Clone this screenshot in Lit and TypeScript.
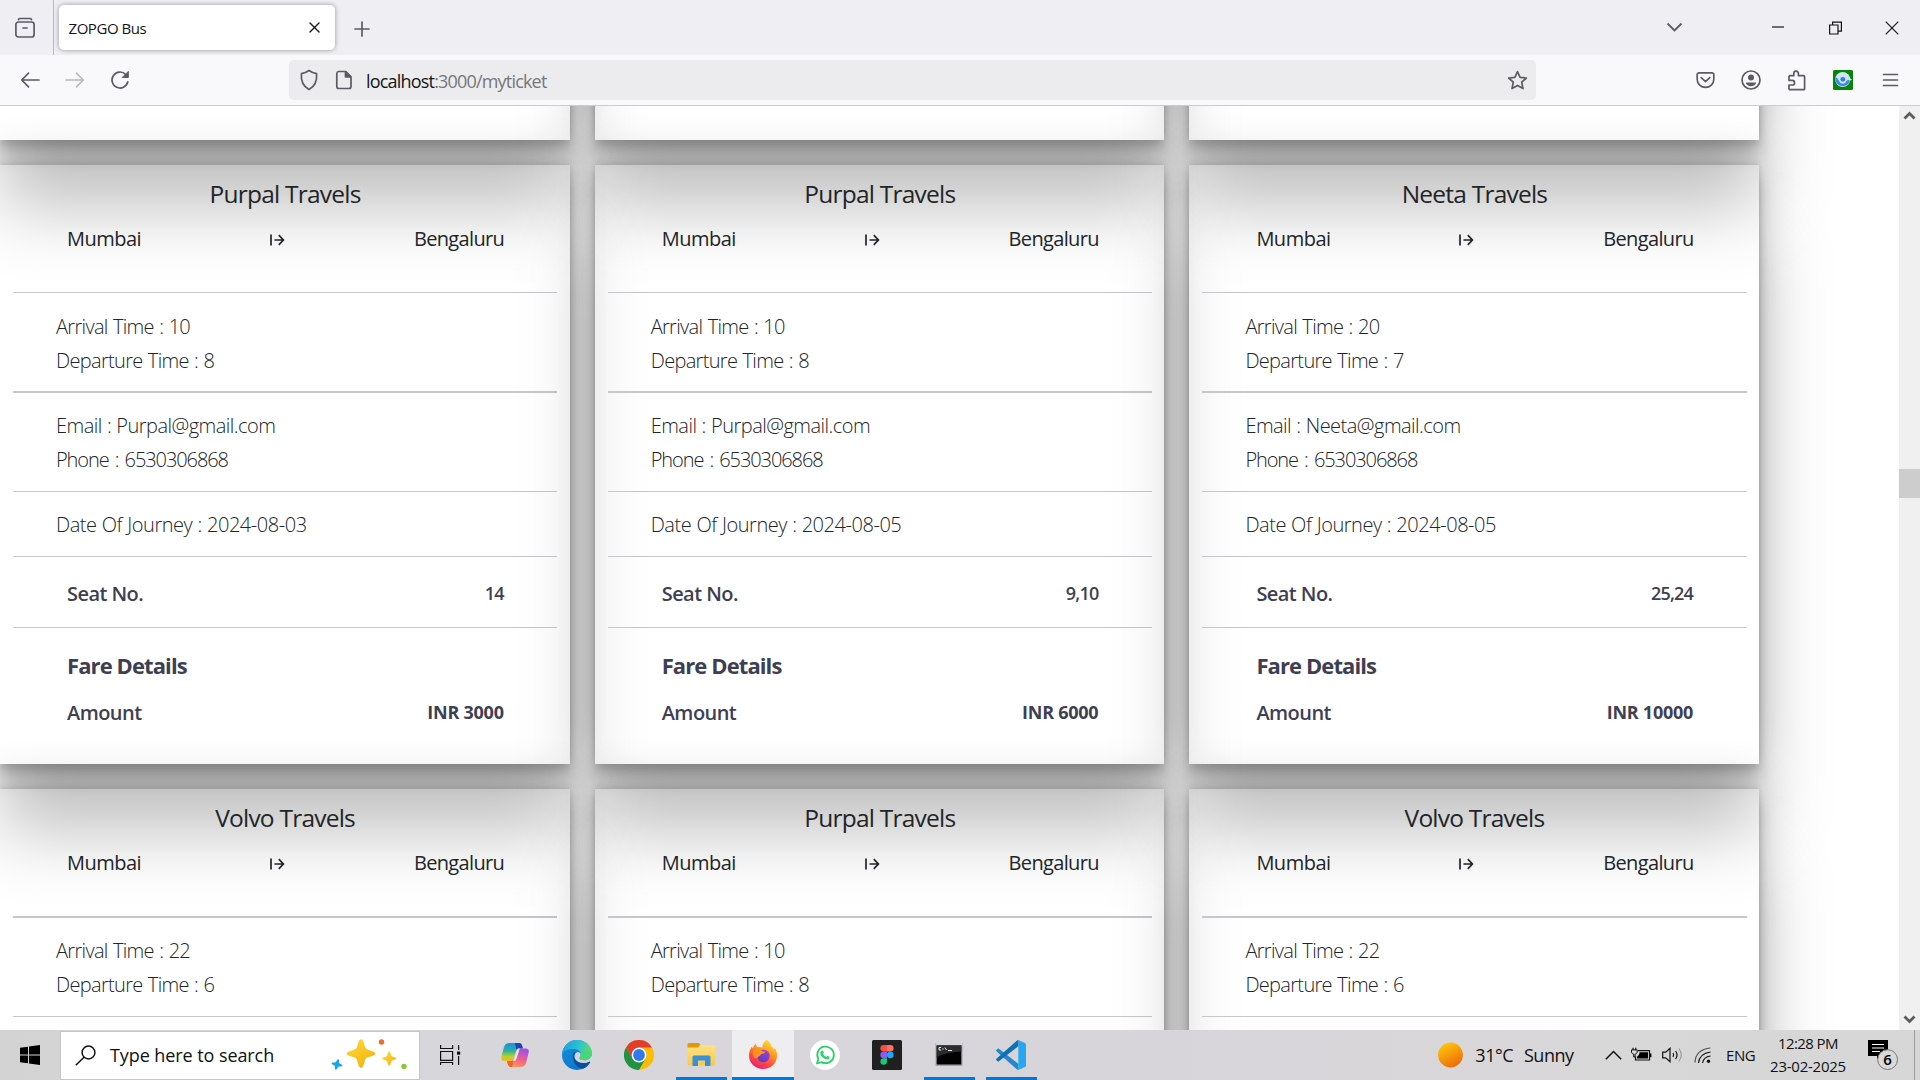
import {LitElement, html, css, svg, nothing} from "lit";
import {customElement, property} from "lit/decorators.js";
import {classMap} from "lit/directives/class-map.js";

interface Ticket {
  bus: string;
  arrival: string;
  departure: string;
  email: string;
  phone: string;
  date: string;
  seats: string;
  amount: string;
}

const PURPAL = {bus: "Purpal Travels", arrival: "10", departure: "8", email: "Purpal@gmail.com", phone: "6530306868"};
const NEETA = {bus: "Neeta Travels", arrival: "20", departure: "7", email: "Neeta@gmail.com", phone: "6530306868"};

const TICKETS: Ticket[] = [
  {...PURPAL, date: "2024-08-03", seats: "14", amount: "3000"},
  {...PURPAL, date: "2024-08-05", seats: "9,10", amount: "6000"},
  {...NEETA, date: "2024-08-05", seats: "25,24", amount: "10000"},
];

/* Tickets of the row whose lower part lies below the fold. */
const NEXT_ROW: Partial<Ticket>[] = [
  {bus: "Volvo Travels", arrival: "22", departure: "6"},
  {bus: "Purpal Travels", arrival: "10", departure: "8"},
  {bus: "Volvo Travels", arrival: "22", departure: "6"},
];

@customElement("ticket-card")
class TicketCard extends LitElement {
  @property({attribute: false}) ticket?: Partial<Ticket>;

  static styles = css`
    :host {
      display: block;
      box-sizing: border-box;
      height: 599px;
      padding: 0 12.5px 0 13px;
      color: #212529;
      font-size: 20px;
      line-height: 30px;
      box-shadow:
        rgba(0, 0, 0, 0.25) 0 67.5px 68.75px,
        rgba(0, 0, 0, 0.12) 0 -15px 37.5px,
        rgba(0, 0, 0, 0.12) 0 5px 7.5px,
        rgba(0, 0, 0, 0.17) 0 15px 16.25px,
        rgba(0, 0, 0, 0.09) 0 -3.75px 6.25px;
    }
    .head { box-sizing: border-box; height: 127px; padding-top: 14px; }
    .title { text-align: center; font-size: 24.5px; letter-spacing: -0.77px; }
    .route {
      display: flex; justify-content: space-between; align-items: center;
      margin-top: 15px; padding: 0 53px 0 54px; letter-spacing: -0.5px;
    }
    .dest { letter-spacing: -0.65px; }
    .arrow { display: block; margin-top: 2px; }
    section { box-sizing: border-box; border-top: 1px solid #c6c7c8; }
    .light { font-weight: 300; padding-left: 43px; line-height: 34px; }
    .times { height: 99px; padding-top: 17px; }
    .contact { height: 100px; border-top-width: 2px; padding-top: 16px; }
    .snap .times { height: 100px; border-top-width: 2px; padding-top: 16px; }
    .snap .contact { height: 99px; border-top-width: 1px; }
    .date { height: 65px; padding-top: 16px; }
    .seat { height: 71px; padding-top: 22px; }
    .fare { height: 137px; padding-top: 22px; }
    .t-time { letter-spacing: -0.68px; word-spacing: 0.8px; }
    .t-mail { letter-spacing: -0.52px; word-spacing: 0.5px; }
    .t-phone { letter-spacing: -1.08px; word-spacing: 2px; }
    .t-date { letter-spacing: -0.45px; word-spacing: 0.4px; }
    .strong { color: #3e3f52; font-weight: 600; }
    .pair { display: flex; justify-content: space-between; padding: 0 53.5px 0 54px; letter-spacing: -0.55px; }
    .value { font-size: 18px; letter-spacing: -0.8px; line-height: 29px; }
    .bold { font-weight: 700; letter-spacing: -0.25px; }
    .fare-title { padding-left: 54px; font-size: 22px; font-weight: 700; letter-spacing: -0.9px; margin-bottom: 18px; }
  `;

  render() {
    const t = this.ticket;
    if (!t) return nothing;
    const full = !!t.email;
    return html`
      <div class=${classMap({snap: !full})}>
        <div class="head">
          <div class="title">${t.bus}</div>
          <div class="route">
            <span>Mumbai</span>
            <svg class="arrow" width="15" height="12" viewBox="0 0 15 12" fill="none" stroke="#212529" stroke-width="1.7">
              <path d="M1 0.5v11M4.5 6h8.5M8.8 1.2 13.4 6l-4.6 4.8" />
            </svg>
            <span class="dest">Bengaluru</span>
          </div>
        </div>
        <section class="light times">
          <div class="t-time">Arrival Time : ${t.arrival}</div>
          <div class="t-time">Departure Time : ${t.departure}</div>
        </section>
        <section class="light contact">
          ${full ? html`<div class="t-mail">Email : ${t.email}</div><div class="t-phone">Phone : ${t.phone}</div>` : nothing}
        </section>
        ${full ? html`
          <section class="light date"><div class="t-date">Date Of Journey : ${t.date}</div></section>
          <section class="strong seat">
            <div class="pair"><span>Seat No.</span><span class="value">${t.seats}</span></div>
          </section>
          <section class="strong fare">
            <div class="fare-title">Fare Details</div>
            <div class="pair"><span>Amount</span><span class="value bold">INR ${t.amount}</span></div>
          </section>` : nothing}
      </div>
    `;
  }
}

@customElement("browser-chrome")
class BrowserChrome extends LitElement {
  static styles = css`
    :host { display: block; color: #15141a; }
    svg { display: block; flex: none; fill: none; stroke: #5b5b66; stroke-width: 1.7; stroke-linecap: round; stroke-linejoin: round; }
    .tabs { display: flex; height: 55px; background: #efeef3; align-items: center; }
    .side { display: flex; width: 54px; height: 55px; box-sizing: border-box; padding-left: 14px; align-items: center; border-right: 1px solid #b9b9c0; }
    .tab {
      display: flex; align-items: center; justify-content: space-between; box-sizing: border-box;
      width: 276px; height: 45px; margin-left: 5px; padding: 0 14px 0 9.5px;
      background: #fff; border-radius: 5px; box-shadow: 0 0 5px rgba(0, 0, 0, 0.38);
      font-size: 15px; letter-spacing: -0.45px;
    }
    .tab svg { stroke: #15141a; stroke-width: 1.4; }
    .plus { margin: 2px 0 0 18.5px; }
    .win { display: flex; align-items: center; margin-left: auto; padding-right: 21.5px; }
    .win svg { stroke: #15141a; stroke-width: 1.2; stroke-linecap: butt; stroke-linejoin: miter; }
    .win .down { stroke: #5b5b66; stroke-width: 1.8; margin-right: 89px; }
    .win .min { margin-right: 45px; }
    .win .rest { margin-right: 43px; }
    .bar { display: flex; align-items: center; box-sizing: border-box; height: 51px; background: #f9f9fb; border-bottom: 1px solid #cbcbd0; padding: 0 21px 0 20px; }
    .back { margin-right: 25px; }
    .fwd { opacity: 0.4; margin-right: 25px; }
    .url {
      display: flex; align-items: center; box-sizing: border-box; width: 1247px; height: 40px;
      margin-left: 159px; padding: 0 8.5px 0 10px; background: #ececee; border-radius: 5px;
      font-size: 18px; letter-spacing: -0.81px;
    }
    .page { margin: 0 13px 0 16px; }
    .address { padding-top: 2px; }
    .path { color: #77767c; }
    .star { margin-left: auto; }
    .tools { display: flex; align-items: center; margin-left: auto; }
    .tools svg + svg { margin-left: 26px; }
    .tools svg.ext { stroke: none; margin-left: 27.5px; }
    .tools svg.menu { margin-left: 29px; }
  `;

  render() {
    return html`
      <div class="tabs">
        <div class="side">
          <svg width="22" height="22" viewBox="0 0 22 22"><path d="M4.5 2.5Q5 1.5 6 1.500h10q1 0 1.500 1" /><rect x="1.900" y="5" width="18.200" height="15" rx="2.500" /><path d="M9 11h4" /></svg>
        </div>
        <div class="tab">
          <span>ZOPGO Bus</span>
          <svg width="13" height="13" viewBox="0 0 13 13"><path d="m2 2 9 9M11 2l-9 9" /></svg>
        </div>
        <svg class="plus" width="16" height="16" viewBox="0 0 16 16"><path d="M8 1v14M1 8h14" /></svg>
        <div class="win">
          <svg class="down" width="17" height="11" viewBox="0 0 17 11"><path d="m1.500 1.500 7 7 7-7" /></svg>
          <svg class="min" width="12" height="12" viewBox="0 0 12 12"><path d="M0 5h12" /></svg>
          <svg class="rest" width="13" height="14" viewBox="0 0 13 14"><path d="M.6 4h8.400v9H.6zM3.600 4V1.100h8.800v9H9" /></svg>
          <svg width="14" height="14" viewBox="0 0 14 14"><path d="m.7.7 12.600 12.600M13.300.7.7 13.300" /></svg>
        </div>
      </div>
      <div class="bar">
        <svg class="back" width="20" height="18" viewBox="0 0 20 18"><path d="M2 9h17M8.500 2.200 1.800 9l6.700 6.800" /></svg>
        <svg class="fwd" width="20" height="18" viewBox="0 0 20 18"><path d="M1 9h17M11.500 2.200 18.200 9l-6.700 6.800" /></svg>
        <svg width="20" height="20" viewBox="0 0 20 20"><path d="M17.800 11.800A8 8 0 1 1 15.800 4.500" /><path d="M18.300 1.800v5.700h-5.700z" fill="#5b5b66" stroke-width="1" /></svg>
        <div class="url">
          <svg width="20" height="22" viewBox="0 0 20 22"><path d="M10 1.500c2.400 1.700 4.700 2.700 7.600 3.200.5 6-1.200 12.300-7.600 15.800C3.600 17 1.900 10.700 2.400 4.700 5.300 4.200 7.600 3.200 10 1.500z" /></svg>
          <svg class="page" width="18" height="20" viewBox="0 0 18 20"><path d="M3.500 1.500h7.300l5.200 5.300v9.700a2 2 0 0 1-2 2H3.800a2 2 0 0 1-2-2v-13a2 2 0 0 1 1.700-2z" /><path d="M10.500 1.800v5h5.200z" fill="#5b5b66" /></svg>
          <span class="address">localhost<span class="path">:3000/myticket</span></span>
          <svg class="star" width="21" height="21" viewBox="0 0 21 21"><path d="m10.500 1.600 2.600 5.700 6.300.7-4.700 4.200 1.300 6.400-5.500-3.200L5 18.600l1.300-6.400L1.600 8l6.300-.7z" /></svg>
        </div>
        <div class="tools">
          <svg width="19" height="18" viewBox="0 0 19 18"><path d="M3 1.800h13a1.800 1.800 0 0 1 1.800 1.800v5a8.300 7.800 0 0 1-16.600 0v-5A1.800 1.800 0 0 1 3 1.800z" /><path d="m5.200 6.600 4.300 4 4.300-4" /></svg>
          <svg width="20" height="20" viewBox="0 0 20 20"><circle cx="10" cy="10" r="9" /><circle cx="10" cy="7.600" r="3" fill="#5b5b66" stroke="none" /><path d="M4.800 12.600h10.400c-.5 2.500-2.800 3.700-5.200 3.700s-4.700-1.200-5.200-3.700z" fill="#5b5b66" stroke="none" /></svg>
          <svg width="19" height="21" viewBox="0 0 19 21"><path d="M6.800 5.700V3.500a2.300 2.300 0 0 1 4.600 0v2.200h5.200a1 1 0 0 1 1 1v12a1 1 0 0 1-1 1H3a1 1 0 0 1-1-1v-3.700h3.200a2.300 2.300 0 0 0 0-4.700H2V6.700a1 1 0 0 1 1-1z" /></svg>
          <svg class="ext" width="20" height="20" viewBox="0 0 20 20"><rect width="20" height="20" rx="1.500" fill="#068406" /><circle cx="9.700" cy="9.500" r="7.600" fill="#cfe4fb" /><path d="M2.200 7.500c2 .2 3.200 1.500 3.800 3.500a4 4 0 0 0 7.600-.2l3.700-1.600A7.600 7.600 0 1 1 2.200 7.500z" fill="#3b8ae4" /><circle cx="9.800" cy="9.300" r="2.400" fill="#2f7fe0" /><path d="m16 7.500 3 2-2.600 1.500z" fill="#cfe4fb" /></svg>
          <svg class="menu" width="17" height="14" viewBox="0 0 17 14"><path d="M1.500 1.500h14M1.500 7h14M1.500 12.500h14" /></svg>
        </div>
      </div>
    `;
  }
}

const sparkle = (x: number, y: number, r: number, fill: string) => svg`
  <path transform="translate(${x} ${y}) scale(${r})" fill=${fill}
    d="M0-1C.14-1 .2-.75.27-.5.33-.34.37-.3.53-.25.8-.17 1-.13 1 0S.8.17.53.25C.37.3.33.34.27.5.2.75.14 1 0 1S-.2.75-.27.5C-.33.34-.37.3-.53.25-.8.17-1 .13-1 0S-.8-.17-.53-.25C-.37-.3-.33-.34-.27-.5-.2-.75-.14-1 0-1z" />`;

const ICONS = {
  copilot: svg`
    <defs>
      <linearGradient id="cl" x1="0" y1="0" x2="0" y2="1"><stop offset="0" stop-color="#1a8fe8" /><stop offset=".45" stop-color="#2fb39a" /><stop offset=".75" stop-color="#b9d12c" /><stop offset="1" stop-color="#f7b52c" /></linearGradient>
      <linearGradient id="cr" x1=".6" y1="0" x2=".2" y2="1"><stop offset="0" stop-color="#a44de8" /><stop offset=".5" stop-color="#f0608c" /><stop offset="1" stop-color="#ffa04e" /></linearGradient>
    </defs>
    <path d="M10 3h9c2 0 2.600 1.200 3.200 3l.7 2.500h-4c-2 0-2.500 1.200-3 3L14 18c-.6 2-1.500 3-3.500 3H4c-2 0-3.200-1.500-2.700-4L4 7c.8-2.700 2.500-4 6-4z" fill="url(#cl)" />
    <path d="M15 3h4c2 0 2.600 1.200 3.200 3l.7 2.500h-4c-1.300 0-2 .4-2.500 1.400z" fill="#1746b8" />
    <path d="M20 27h-9c-2 0-2.600-1.200-3.200-3L7 21h4c2 0 2.700-1 3.200-3l2-6.500c.6-2 1.500-3 3.500-3H26c2 0 3.200 1.500 2.700 4L26 23c-.8 2.700-2.500 4-6 4z" fill="url(#cr)" />
    <path d="M7 21h4c1.500 0 2.300-.6 2.800-1.800L12 26.900h-1c-2 0-2.600-1.200-3.200-3z" fill="#f0622e" />
    <path d="M16.800 10c.6-1.200 1.500-1.500 3-1.500l-3.400 10.500c-.6 1.800-1.600 2-3.200 2z" fill="#e9e6ee" />`,
  edge: svg`
    <defs>
      <linearGradient id="eg" x1="0" y1=".3" x2="1" y2=".5"><stop offset="0" stop-color="#1ba0e0" /><stop offset=".55" stop-color="#2fc3cf" /><stop offset="1" stop-color="#62e05a" /></linearGradient>
      <linearGradient id="eb" x1="0" y1="0" x2="1" y2="1"><stop offset="0" stop-color="#1591dd" /><stop offset="1" stop-color="#0a6cc4" /></linearGradient>
    </defs>
    <circle cx="15" cy="15" r="15" fill="url(#eb)" />
    <path d="M.2 13.500C1 6 7 0 15 0c8.500 0 15 6 15 12.500 0 5-3.500 7.800-7.500 7.800-3.300 0-5-1-5-2.300 0-.7 1.300-1.500 1.300-3.600 0-2.800-3-5.300-7-5.300C6.500 9.100 2 10.500.2 13.500z" fill="url(#eg)" />
    <path d="M11.500 13c-2 5 .8 15 9.500 15.800 3-1.200 5.500-3.500 7-6.300.4-.8-.3-1.200-1-.7-6 3-14 .4-14.500-4.800-.1-1.500.2-3 1-4.200-.8-.3-1.600-.3-2 .2z" fill="#0d4f9e" />
    <path d="M28 22.500c.4-.8-.3-1.200-1-.7-6 3-14.400 0-14.500-5.300 0-2.500 1.500-4.300 3.300-4.600 2 .2 3 1.500 3 2.900 0 1.800-1.300 2.500-1.300 3.200 0 1.300 1.700 2.300 5 2.300 4 0 7.500-2.800 7.500-7.300V22z" fill="#d8d6dc" />
    <path d="M17.500 18c0 1.300 1.700 2.300 5 2.300 4 0 7.500-2.800 7.500-7.800l-5-2-7 3c1.400 2 -.5 3.800-.5 4.500z" fill="#4cd47c" />`,
  chrome: svg`
    <circle cx="15" cy="15" r="15" fill="#fbbc08" />
    <path d="M2 7.500A15 15 0 0 1 28 7.500H15L8.500 18.800z" fill="#e33b2e" />
    <path d="M2 7.500a15 15 0 0 0 13 22.500l6.500-11.300L8.600 18.800z" fill="#1f9246" />
    <circle cx="15" cy="15" r="7.400" fill="#fff" /><circle cx="15" cy="15" r="5.900" fill="#2f79ee" />`,
  explorer: svg`
    <defs><linearGradient id="fo" x1="0" y1="0" x2="0" y2="1"><stop offset="0" stop-color="#ffe083" /><stop offset="1" stop-color="#f9c94c" /></linearGradient></defs>
    <path d="M1.500 4.500q0-1.500 1.500-1.500h10l1.500 2v3h-13z" fill="#dd9a05" />
    <path d="M1.500 7.500h10.500l2-2.500h13.500q1.500 0 1.500 1.500V24q0 1.500-1.500 1.500H3q-1.500 0-1.500-1.500z" fill="url(#fo)" />
    <path d="M6.500 26V17q0-1.500 1.500-1.500h15q1.500 0 1.500 1.500v9H19v-5.500h-7V26z" fill="#3a8fd6" />`,
  firefox: svg`
    <defs>
      <linearGradient id="ff" x1=".8" y1="0" x2=".3" y2="1"><stop offset="0" stop-color="#ffe437" /><stop offset=".4" stop-color="#ff9a1f" /><stop offset=".7" stop-color="#ff4a3e" /><stop offset="1" stop-color="#e41f7b" /></linearGradient>
      <linearGradient id="fp" x1=".8" y1="0" x2=".3" y2="1"><stop offset="0" stop-color="#a63ee0" /><stop offset="1" stop-color="#5a3ac0" /></linearGradient>
    </defs>
    <path d="M18.500 0c3.300 1.800 4.500 4 5 6.500 1.300.8 1.800 1.700 2.300 3 .6-.4.800-1 .8-1.700 2 2.800 2.800 5.700 2.400 9C28.300 24 22.500 29 15 29S1 23.500 1 15.500c0-4 1.500-7 3-9 .1 1 .3 1.500.8 2 .4-2 1.600-3.800 3.200-5 0 1.500.6 2.800 1.700 3.700 2-.3 3.600 0 4.800.5C14 5 15.500 2 18.500 0z" fill="url(#ff)" />
    <circle cx="15.500" cy="16" r="6.200" fill="url(#fp)" />
    <path d="M5 10.500c3-2 7-1.700 9.500.8 1 .3 2 .3 3 .2-.5 1.800-2.500 2.300-4.300 2.700-1 .3-.7 1.800-2.700 2.200-1.500.3-.8 2.800-4 1.500C5 16 4.500 13 5 10.500z" fill="#ff9220" />`,
  whatsapp: svg`
    <circle cx="15" cy="15" r="15" fill="#fff" />
    <path d="M7 23.500l1.300-4.600a8.300 8.300 0 1 1 3.200 3.200z" fill="none" stroke="#25d366" stroke-width="1.800" stroke-linejoin="round" />
    <path d="M12.200 10.500c.5-.2.900 0 1 .4l.6 1.500c.1.500-.4 1-.8 1.400.7 1.500 1.800 2.500 3.300 3.200.5-.5.8-1.200 1.300-1l1.700.8c.4.300.2 1.200-.2 1.700-1.200 1.300-3 .9-4.900-.1-1.700-1-3-2.400-3.700-4.200-.5-1.500.2-3 1.700-3.700z" fill="#25d366" />`,
  figma: svg`
    <rect width="30" height="30" rx="1.500" fill="#202020" />
    <path d="M15 5h-3.300a3.300 3.300 0 0 0 0 6.600H15z" fill="#f9503a" /><path d="M15 5h3.300a3.300 3.300 0 0 1 0 6.600H15z" fill="#ff7262" />
    <path d="M15 11.600h-3.300a3.300 3.300 0 0 0 0 6.600H15z" fill="#8d58ff" /><circle cx="18.300" cy="14.900" r="3.300" fill="#19a9f5" />
    <path d="M15 18.200h-3.300a3.300 3.300 0 1 0 3.300 3.300z" fill="#18c979" />`,
  terminal: svg`
    <rect x="1.500" y="3" width="27" height="23" fill="#9fa4ab" /><rect x="2" y="3" width="26" height="2.200" fill="#cfd6de" />
    <rect x="2.700" y="5.500" width="24.600" height="19" fill="#020202" /><path d="M2.700 5.500h24.600v6C20 12 10 13 2.700 17z" fill="#2c2c2c" />
    <path d="M5 7.500h2.200M5 7.500v2.500h2.200M9 8v.8M9 9.500v.5M11 7.500l1.500 2.500M14 10.500h4" stroke="#fff" stroke-width=".9" fill="none" />`,
  vscode: svg`
    <path d="M2.600 8.600 22.500 24v5.800h-1.200L.4 11.300q-.6-.7 0-1.300L1.500 8.700q.5-.5 1.100-.1z" fill="#2489ca" />
    <path d="M2.600 21.400 22.500 6V.2h-1.200L.4 18.700q-.6.700 0 1.300l1.100 1.300q.5.500 1.100.1z" fill="#1070b3" />
    <path d="M22.300 0 29 3q1 .5 1 1.500v21q0 1-1 1.500l-6.700 3z" fill="#27a7f0" />`,
};

type AppKey = keyof typeof ICONS;
const APPS: {icon: AppKey; running?: boolean; active?: boolean}[] = [
  {icon: "copilot"}, {icon: "edge"}, {icon: "chrome"}, {icon: "explorer", running: true},
  {icon: "firefox", running: true, active: true}, {icon: "whatsapp"}, {icon: "figma"},
  {icon: "terminal", running: true}, {icon: "vscode", running: true},
];

@customElement("task-bar")
class TaskBar extends LitElement {
  static styles = css`
    :host {
      display: flex; align-items: center; box-sizing: border-box; height: 50px; color: #111; padding-right: 5px;
      background: linear-gradient(90deg, #d3d3d4 0, #d7d6db 25%, #d7d5da 60%, #d9d7d9 80%, #d7d7d7 100%);
    }
    svg { display: block; flex: none; }
    .start { padding: 0 20px; }
    .search {
      display: flex; align-items: center; box-sizing: border-box; width: 360px; height: 49px;
      margin-top: 1px; padding: 0 12px 0 14px; background: #fff; border: 1px solid #c6c6c8;
      font-size: 18px; letter-spacing: -0.08px;
    }
    .search span { padding-bottom: 2px; }
    .search .glass { margin-right: 14px; }
    .search .spark { margin: 0 0 1px auto; }
    .view { width: 64px; display: flex; box-sizing: border-box; padding-left: 20px; }
    .app { position: relative; display: flex; width: 62px; height: 50px; align-items: center; justify-content: center; }
    .app.active { background: #eeeef0; }
    .app.running::after { content: ""; position: absolute; left: 5.5px; right: 5.5px; bottom: 0; height: 3px; background: #0078d7; }
    .app.active::after { left: 0; right: 0; }
    .tray { display: flex; align-items: center; margin-left: auto; height: 50px; }
    .weather { display: flex; gap: 11px; font-size: 18px; letter-spacing: -0.5px; margin: 0 31px 0 12.5px; }
    .battery { margin-left: 9.5px; }
    .volume { margin-left: 10px; }
    .wifi { margin-left: 11px; }
    .lang { font-size: 15px; margin: 0 15px 0 14px; letter-spacing: -0.4px; width: 29px; }
    .clock { width: 76px; text-align: center; font-size: 15px; line-height: 23px; letter-spacing: -0.25px; margin-right: 22px; }
    .clock .time { letter-spacing: -0.6px; }
    .note { margin-right: 15px; }
    .note text { font: 600 15px "Open Sans", "Noto Sans", sans-serif; }
    .peek { width: 1px; height: 50px; background: #a0a0a2; }
  `;

  render() {
    return html`
      <div class="start">
        <svg width="20" height="20" viewBox="0 0 20 20"><path d="M0 2.800 8 1.700v7.800H0zM9 1.500 20 0v9.500H9zM0 10.500h8v7.800l-8-1.100zM9 10.500h11V20L9 18.500z" /></svg>
      </div>
      <div class="search">
        <svg class="glass" width="21" height="21" viewBox="0 0 21 21" fill="none" stroke="#111" stroke-width="1.500"><circle cx="13.500" cy="7.500" r="6.400" /><path d="M9 12.200.8 20.300" /></svg>
        <span>Type here to search</span>
        <svg class="spark" width="77" height="32" viewBox="0 0 77 32">
          <defs><linearGradient id="sy" x1="0" y1="0" x2=".7" y2="1"><stop offset="0" stop-color="#ffdc3a" /><stop offset="1" stop-color="#f3b411" /></linearGradient></defs>
          ${sparkle(31, 14.5, 14.3, "url(#sy)")}${sparkle(59.200, 19.500, 7, "url(#sy)")}
          <g transform="rotate(14 7 25.500)">${sparkle(7, 25.500, 5.500, "#15a5ec")}</g>
          <circle cx="51.500" cy="3" r="2.700" fill="#f26a2e" /><circle cx="74" cy="27.500" r="2.700" fill="#8cc63f" />
        </svg>
      </div>
      <div class="view">
        <svg width="21" height="20" viewBox="0 0 21 20" fill="none" stroke="#111" stroke-width="1.200"><path d="M.6 0v3.500h12V0M.6 6.500h12v8.800H.6zM.6 20v-2.500h12V20M18.600 0v5M18.600 11v9" /><path d="M17 6.500h3.200v3.200H17z" fill="#111" stroke="none" /></svg>
      </div>
      ${APPS.map(a => html`
        <div class=${classMap({app: true, running: !!a.running, active: !!a.active})}>
          <svg width="30" height="30" viewBox="0 0 30 30">${ICONS[a.icon]}</svg>
        </div>`)}
      <div class="tray">
        <svg width="25" height="26" viewBox="0 0 25 26"><defs><linearGradient id="sun" x1=".2" y1="0" x2=".7" y2="1"><stop offset="0" stop-color="#ffca0a" /><stop offset="1" stop-color="#ec6a06" /></linearGradient></defs><circle cx="12.500" cy="13" r="12.400" fill="url(#sun)" /></svg>
        <div class="weather"><span>31°C</span><span>Sunny</span></div>
        <svg width="17" height="10" viewBox="0 0 17 10" fill="none" stroke="#111" stroke-width="1.500"><path d="m.8 9.200 7.700-7.700 7.700 7.700" /></svg>
        <svg class="battery" width="21" height="16" viewBox="0 0 21 16"><path d="M7 3.700h11.500v9.300H4.500V9.500" fill="none" stroke="#111" stroke-width="1.200" /><path d="M8.500 5.300h8.500v6.200H6V9.700Q8.300 8.300 8.500 6z" /><path d="M19 6.500h1.400v3.800H19z" /><path d="M2 .8V3M4.700.8V3" stroke="#111" stroke-width="1.200" /><path d="M.5 2.900h5.700v2.300Q5.500 7 4 7.300V10H2.700V7.300Q.9 6.800.5 5.200z" fill="none" stroke="#111" /></svg>
        <svg class="volume" width="21" height="16" viewBox="0 0 21 16" fill="none" stroke="#111" stroke-width="1.200"><path d="M.7 5.200h3L8 1.300v13.400l-4.300-3.900h-3z" /><path d="M11 6q1.300 2 0 4" /><path d="M13.600 4q3 4 0 8" /><path d="M16.800 1.500q5 6.500 0 13" stroke="#9c9c9c" /></svg>
        <svg class="wifi" width="18" height="18" viewBox="0 0 18 18" fill="none" stroke="#111" stroke-width="1.200"><path d="M1 16.500Q1.500 3.500 16.500 2" stroke="#555" /><path d="M4.500 17Q5.500 7.500 16.500 6M8.500 17Q9.500 11 16.500 10" /><circle cx="14.500" cy="15.300" r="1.700" fill="#111" stroke="none" /></svg>
        <div class="lang">ENG</div>
        <div class="clock"><div class="time">12:28 PM</div><div>23-02-2025</div></div>
        <svg class="note" width="31" height="32" viewBox="0 0 31 32">
          <path d="M0 1h20v16h-7.500L9 20v-3H0z" /><path d="M4 5.500h12M4 9h12M4 12.500h8" stroke="#fff" stroke-width="1.200" />
          <circle cx="19.600" cy="20.600" r="9.900" fill="#d9d9da" stroke="#77777a" stroke-width="1" /><text x="19.600" y="26" text-anchor="middle">6</text>
        </svg>
        <div class="peek"></div>
      </div>
    `;
  }
}

@customElement("app-root")
class AppRoot extends LitElement {
  static styles = css`
    :host {
      display: flex; flex-direction: column; width: 1920px; height: 1080px; overflow: hidden;
      background: #fff; font-family: "Open Sans", "Noto Sans", sans-serif;
    }
    .view { display: flex; height: 924px; }
    .page { flex: 1; overflow: hidden; }
    .grid { display: grid; grid-template-columns: repeat(3, 569.7px); gap: 25px; margin-top: -565px; }
    .scroll { display: flex; flex-direction: column; align-items: center; width: 21px; box-sizing: border-box; padding: 5px 0 6px; background: #f0f0f0; }
    .scroll svg { display: block; fill: none; stroke: #5c5c5c; stroke-width: 2.8; }
    .thumb { width: 21px; height: 29px; margin: 349px 0 auto; background: #cdcdcd; }
  `;

  render() {
    return html`
      <browser-chrome></browser-chrome>
      <div class="view">
        <div class="page">
          <div class="grid">
            ${[1, 2, 3].map(() => html`<ticket-card></ticket-card>`)}
            ${[...TICKETS, ...NEXT_ROW].map(t => html`<ticket-card .ticket=${t}></ticket-card>`)}
          </div>
        </div>
        <div class="scroll">
          <svg width="13" height="9" viewBox="0 0 13 9"><path d="m1.500 7.500 5-5 5 5" /></svg>
          <div class="thumb"></div>
          <svg width="13" height="9" viewBox="0 0 13 9"><path d="m1.500 1.500 5 5 5-5" /></svg>
        </div>
      </div>
      <task-bar></task-bar>
    `;
  }
}
